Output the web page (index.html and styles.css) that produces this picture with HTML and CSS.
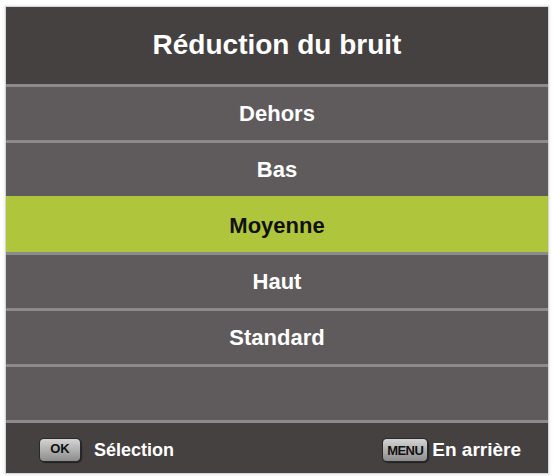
FILE: index.html
```html
<!DOCTYPE html>
<html lang="fr">
<head>
<meta charset="utf-8">
<title>Réduction du bruit</title>
<link rel="stylesheet" href="styles.css">
</head>
<body>
<div class="panel">
  <div class="title">Réduction du bruit</div>
  <div class="row">Dehors</div>
  <div class="row">Bas</div>
  <div class="row selected">Moyenne</div>
  <div class="row">Haut</div>
  <div class="row">Standard</div>
  <div class="row"></div>
  <div class="footer">
    <div class="hint"><span class="key key-ok">OK</span><span class="label">Sélection</span></div>
    <div class="hint"><span class="key key-menu">MENU</span><span class="label">En arrière</span></div>
  </div>
</div>
</body>
</html>
```
FILE: styles.css
```css
html, body {
  margin: 0;
  padding: 0;
  background: #ffffff;
}
body {
  width: 553px;
  height: 476px;
  padding: 7px 5px 0 6px;
  box-sizing: border-box;
  font-family: "Liberation Sans", Arial, sans-serif;
}
.panel {
  width: 542px;
  height: 466px;
  display: flex;
  flex-direction: column;
  background: #5f5b5c;
  box-shadow: 0 0 0 1px #d6d6d6, 0 0 2px 2px #ececec;
}
.title {
  height: 77px;
  flex: none;
  background: #454141;
  color: #ffffff;
  font-weight: bold;
  font-size: 28px;
  display: flex;
  align-items: center;
  justify-content: center;
  padding-bottom: 1px;
  box-sizing: border-box;
}
.row {
  height: 56px;
  flex: none;
  box-sizing: border-box;
  border-top: 3px solid #8c8a8a;
  background: #5f5b5c;
  color: #ffffff;
  font-weight: bold;
  font-size: 22px;
  display: flex;
  align-items: center;
  justify-content: center;
}
.row.selected {
  background: #afc53b;
  border-top-color: #afc53b;
  color: #111111;
}
.footer {
  flex: 1;
  border-top: 3px solid #8c8a8a;
  background: #454141;
  display: flex;
  align-items: center;
  justify-content: space-between;
  padding: 4px 27px 0 34px;
}
.hint {
  display: flex;
  align-items: center;
  color: #ffffff;
  font-weight: bold;
}
.key {
  display: inline-flex;
  align-items: center;
  justify-content: center;
  color: #111;
  font-weight: bold;
  border-radius: 4px;
  background: linear-gradient(#d4d4d4, #a9a9a9 60%, #8c8c8c);
  box-shadow: 0 0 0 1px #2a2828, 1px 1px 1px 1px #222;
  height: 22px;
  box-sizing: border-box;
}
.key-ok {
  width: 40px;
  font-size: 13px;
  padding-bottom: 4px;
}
.key-menu {
  width: 44px;
  font-size: 13px;
  letter-spacing: -0.6px;
}
.hint .label {
  font-size: 18px;
}
.key-ok + .label {
  margin-left: 14px;
}
.key-menu + .label {
  margin-left: 5px;
  font-size: 19px;
}
```
